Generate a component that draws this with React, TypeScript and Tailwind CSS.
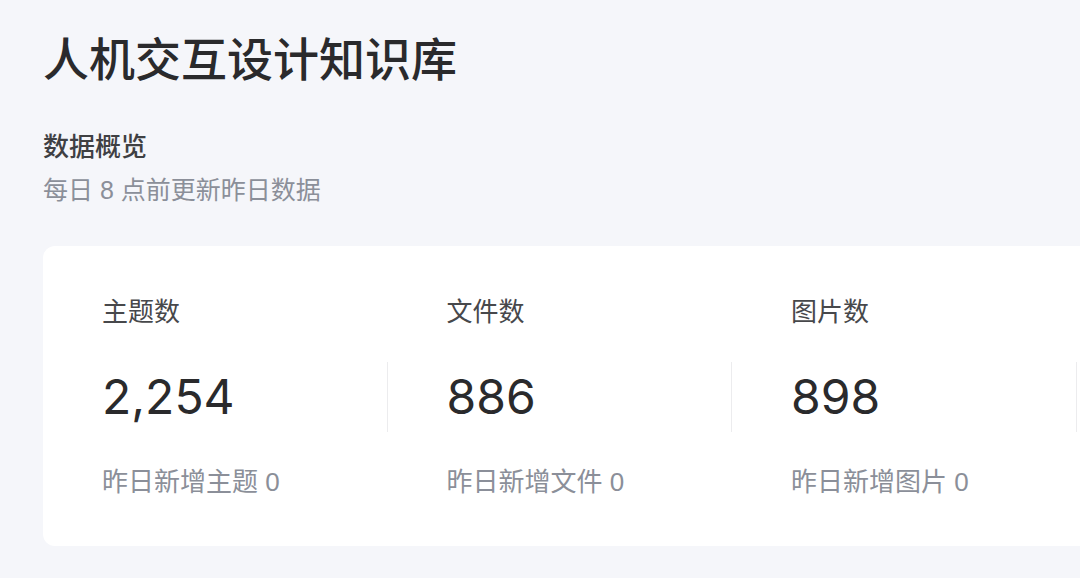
import React from 'react'

const stats = [
  { label: '主题数', value: '2,254', note: '昨日新增主题 0' },
  { label: '文件数', value: '886', note: '昨日新增文件 0' },
  { label: '图片数', value: '898', note: '昨日新增图片 0' },
]

const App: React.FC = () => {
  return (
    <div
      className="w-[1080px] h-[578px] overflow-hidden bg-[#f5f6fa] pl-[43px] pt-[37px]"
      style={{ fontFamily: '"Liberation Sans", "Noto Sans CJK SC", sans-serif' }}
    >
      {/* Page title */}
      <h1 className="text-[46px] leading-[46px] font-medium text-[#2a2a2c]">人机交互设计知识库</h1>

      {/* Section header */}
      <h2 className="mt-[51px] text-[26px] leading-[26px] font-medium text-[#3f4043]">数据概览</h2>
      <p className="mt-[17px] text-[25px] leading-[26px] text-[#8b8f99]">每日 8 点前更新昨日数据</p>

      {/* Stats card */}
      <div className="mt-[43px] w-[1500px] h-[300px] rounded-xl bg-white pt-[53px] flex">
        {stats.map((s, i) => (
          <div key={i} className="w-[344.5px] flex flex-col">
            <div className="pl-[59px] text-[26px] leading-[26px] text-[#47484b]">{s.label}</div>
            <div className="mt-[37px] h-[70px] flex items-center pl-[59px] border-r border-[#ececee]">
              <span className="text-[48px] leading-[48px] text-[#2a2a2c]" style={{ fontFamily: 'Inter, "Liberation Sans", sans-serif' }}>
                {s.value}
              </span>
            </div>
            <div className="mt-[37px] pl-[59px] text-[26px] leading-[26px] text-[#8b8f99]">{s.note}</div>
          </div>
        ))}
      </div>
    </div>
  )
}

export default App
